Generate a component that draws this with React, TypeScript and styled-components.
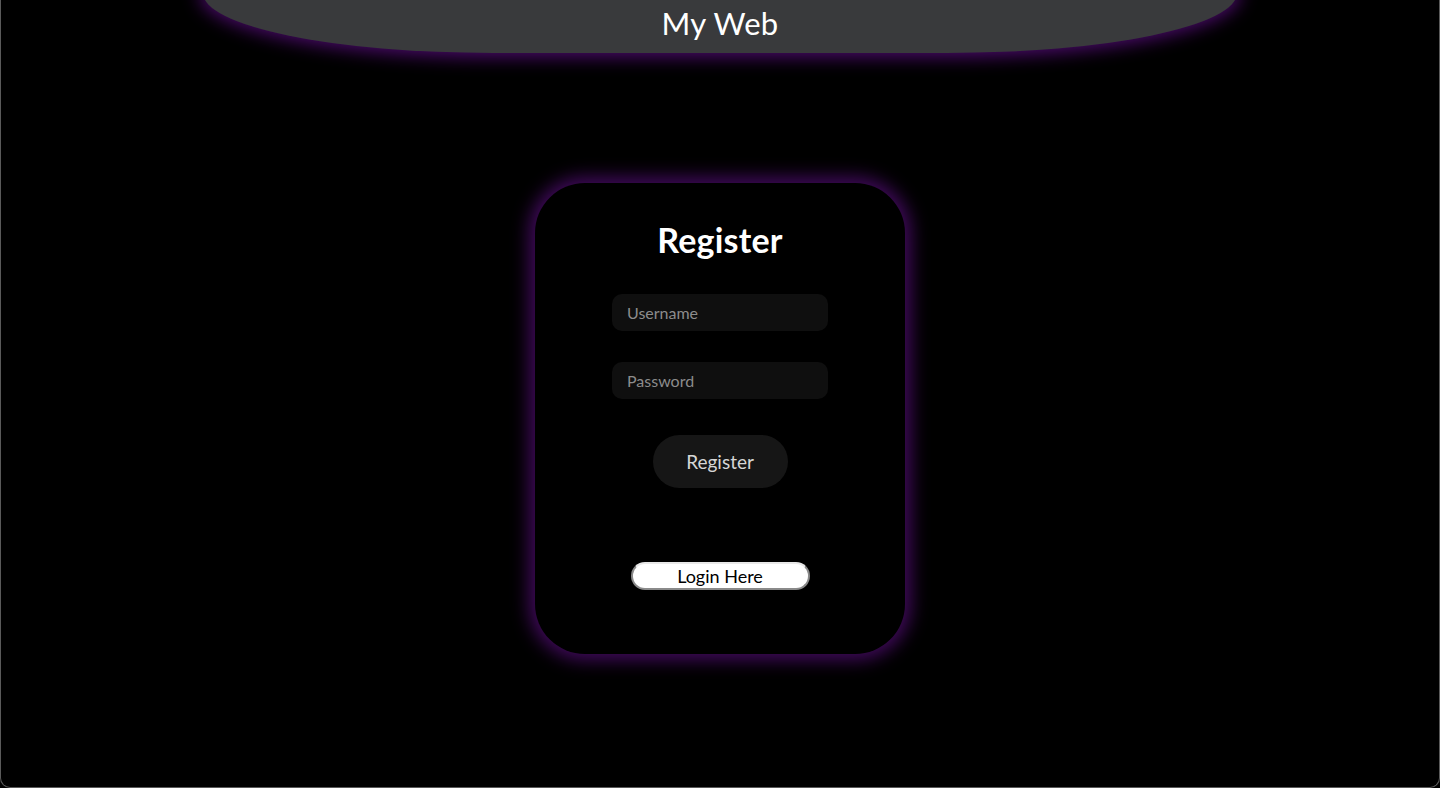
import React from "react";
import styled, { createGlobalStyle } from "styled-components";

const Global = createGlobalStyle`
  html, body { margin: 0; padding: 0; background: #000; }
  body { font-family: Lato, "Noto Sans", sans-serif; }
  * { box-sizing: border-box; }
`;

const Page = styled.div`
  height: 788px;
  background: #000;
  border: 1px solid #5a5a5a;
  border-top: none;
  border-radius: 0 0 10px 10px;
  overflow: hidden;
  display: flex;
  flex-direction: column;
  align-items: center;
`;

const Header = styled.header`
  width: 1034px;
  height: 61px;
  margin-top: -8px;
  flex-shrink: 0;
  background: #393a3c;
  border-radius: 0 0 290px 290px / 0 0 60px 60px;
  box-shadow: 0 0 18px 4px rgba(84, 12, 120, 0.9);
  display: flex;
  align-items: center;
  justify-content: center;
  padding-top: 1px;
`;

const Brand = styled.h1`
  margin: 0;
  color: #fff;
  font-size: 31px;
  font-weight: 400;
  letter-spacing: 0.3px;
`;

const Card = styled.main`
  margin-top: 130px;
  width: 370px;
  height: 471px;
  border-radius: 50px;
  background: #000;
  box-shadow: 0 0 18px 6px rgba(76, 12, 108, 0.85);
  display: flex;
  flex-direction: column;
  align-items: center;
  padding-top: 37px;
`;

const Title = styled.h2`
  margin: 0;
  color: #fff;
  font-size: 34px;
  line-height: 40px;
  font-weight: 700;
  letter-spacing: 0.2px;
`;

const Input = styled.input<{ $gap: number }>`
  margin-top: ${(p) => p.$gap}px;
  width: 216px;
  height: 37px;
  border: none;
  outline: none;
  border-radius: 10px;
  background: #0f0f0f;
  color: #ddd;
  padding: 0 15px;
  font-family: Lato, "Noto Sans", sans-serif;
  font-size: 16px;
  &::placeholder { color: #8c8c8c; }
`;

const SubmitButton = styled.button`
  margin-top: 36px;
  width: 135px;
  height: 53px;
  border: none;
  border-radius: 27px;
  background: #161616;
  color: #d6d6d6;
  font-family: Lato, "Noto Sans", sans-serif;
  font-size: 19px;
  cursor: pointer;
`;

const LoginButton = styled.button`
  margin-top: 74px;
  width: 179px;
  height: 28px;
  border: 2px solid #8a8a8a;
  border-top-color: #e8e8e8;
  border-radius: 14px;
  background: #fff;
  color: #000;
  font-family: Lato, "Noto Sans", sans-serif;
  font-size: 18px;
  padding: 0;
  cursor: pointer;
`;

export default function App() {
  return (
    <>
      <Global />
      <Page>
        <Header>
          <Brand>My Web</Brand>
        </Header>
        <Card>
          <Title>Register</Title>
          <Input $gap={34} type="text" placeholder="Username" />
          <Input $gap={31} type="password" placeholder="Password" />
          <SubmitButton>Register</SubmitButton>
          <LoginButton>Login Here</LoginButton>
        </Card>
      </Page>
    </>
  );
}
